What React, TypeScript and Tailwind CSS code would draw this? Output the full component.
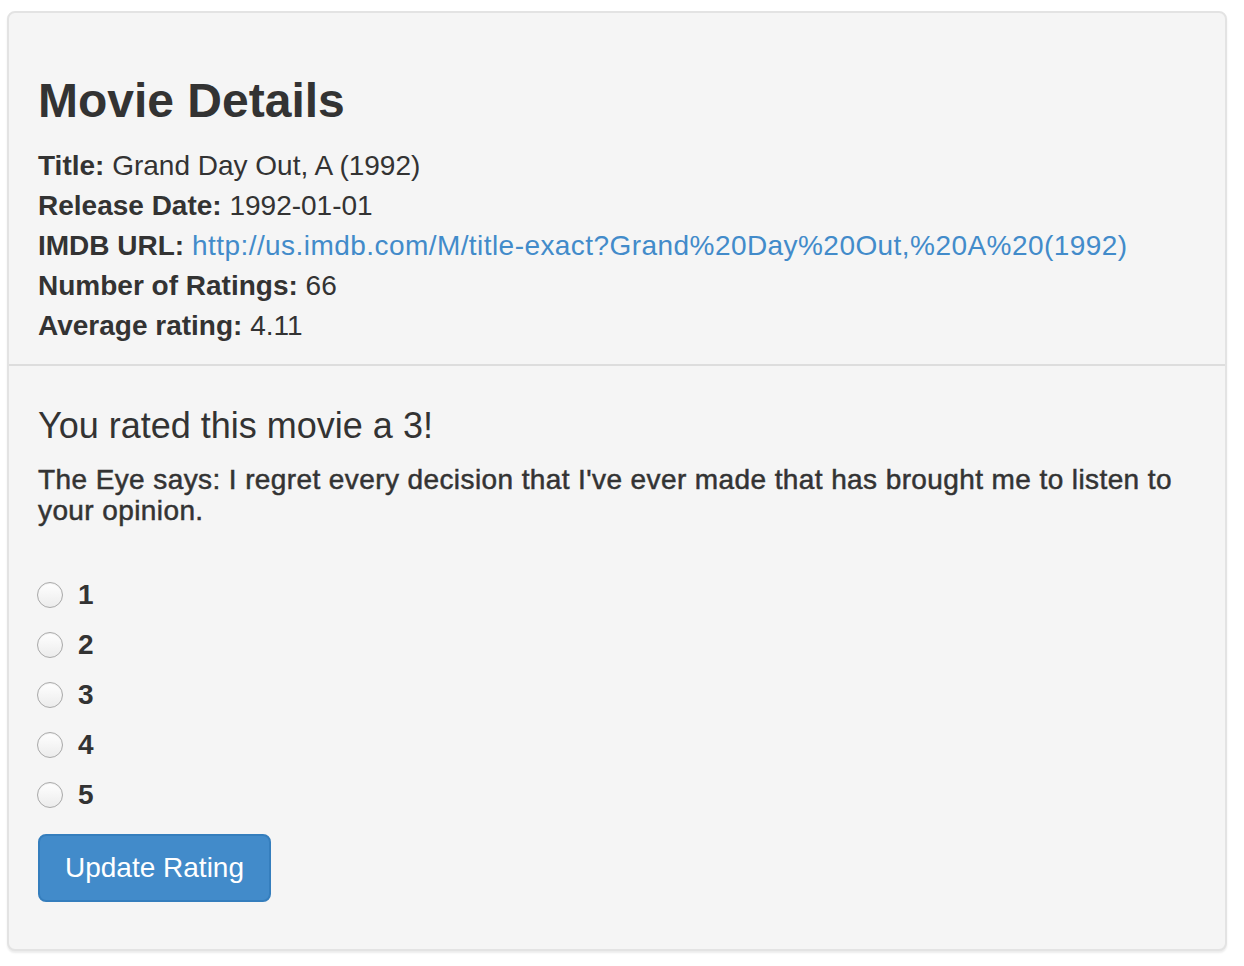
import { useState } from 'react';

const details = [
  { label: 'Title:', value: 'Grand Day Out, A (1992)' },
  { label: 'Release Date:', value: '1992-01-01' },
  { label: 'IMDB URL:', value: 'http://us.imdb.com/M/title-exact?Grand%20Day%20Out,%20A%20(1992)', link: true },
  { label: 'Number of Ratings:', value: '66' },
  { label: 'Average rating:', value: '4.11' },
];

export default function App() {
  const [rating, setRating] = useState<number | null>(null);

  return (
    <div className="min-h-screen bg-white pt-[11px] pl-[7px] font-['Liberation_Sans',Arial,sans-serif] text-[#333]">
      <div className="w-[1220px] bg-[#f5f5f5] border-2 border-[#e3e3e3] rounded-[8px] shadow-[0_2px_2px_rgba(0,0,0,0.08)]">
        <div className="px-[29px] pt-[61px] pb-[18px] border-b-2 border-[#dddddd]">
          <h3 className="text-[48px] leading-[53px] font-bold mb-[19px]">Movie Details</h3>
          <div className="text-[28px] leading-[40px]">
            {details.map((d) => (
              <div key={d.label}>
                <b>{d.label}</b>{' '}
                {d.link ? (
                  <a href="#" className="text-[#428bca] tracking-[0.44px]">{d.value}</a>
                ) : (
                  d.value
                )}
              </div>
            ))}
          </div>
        </div>

        <div className="px-[29px] pt-[40px] pb-[47px]">
          <h4 className="text-[36px] leading-[40px] font-medium mb-[18px]">You rated this movie a 3!</h4>
          <h5 className="text-[28px] leading-[31px] font-medium tracking-[0.4px] [-webkit-text-stroke:0.5px_#333]">
            The Eye says: I regret every decision that I've ever made that has brought me to listen to your opinion.
          </h5>

          <div className="mt-[49px] flex flex-col gap-[10px]">
            {[1, 2, 3, 4, 5].map((n) => (
              <label key={n} className="flex items-center h-[40px] cursor-pointer" onClick={() => setRating(n)}>
                <span className="ml-[-1px] w-[26px] h-[26px] rounded-full border border-[#a9a9a9] bg-gradient-to-b from-[#ffffff] to-[#ececec] shadow-[inset_0_1px_1px_rgba(0,0,0,0.06)] flex items-center justify-center">
                  {rating === n && <span className="w-[10px] h-[10px] rounded-full bg-[#333]" />}
                </span>
                <span className="ml-[15px] text-[28px] leading-[40px] font-bold">{n}</span>
              </label>
            ))}
          </div>

          <button className="mt-[19px] h-[68px] px-[25px] text-[28px] leading-[40px] text-white bg-[#428bca] border-2 border-[#357ebd] rounded-[8px]">
            Update Rating
          </button>
        </div>
      </div>
    </div>
  );
}
